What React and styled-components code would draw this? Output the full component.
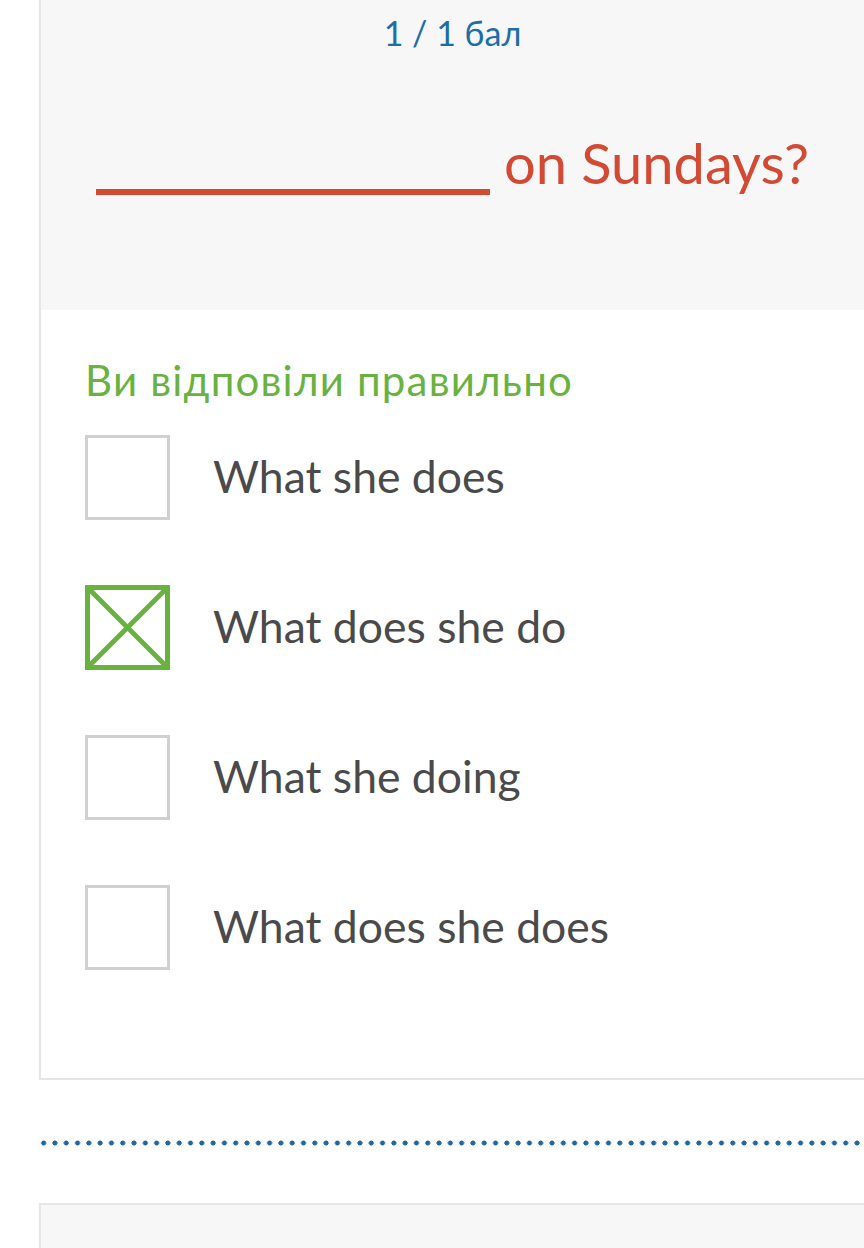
import React from 'react'
import styled, { createGlobalStyle } from 'styled-components'

const GlobalStyle = createGlobalStyle`
    html, body {
        margin: 0;
        padding: 0;
        background: #ffffff;
        font-family: Lato, "Open Sans", sans-serif;
        overflow: hidden;
    }
`;

const options = [
    { text: 'What she does', checked: false },
    { text: 'What does she do', checked: true },
    { text: 'What she doing', checked: false },
    { text: 'What does she does', checked: false },
];

function CheckMark() {
    return (
        <svg width="85" height="85" viewBox="0 0 85 85">
            <rect x="2.5" y="2.5" width="80" height="80" fill="none" stroke="#6ab23f" strokeWidth="5" />
            <line x1="4" y1="4" x2="81" y2="81" stroke="#6ab23f" strokeWidth="5" />
            <line x1="81" y1="4" x2="4" y2="81" stroke="#6ab23f" strokeWidth="5" />
        </svg>
    )
}

function App() {
    return (
        <Page>
            <GlobalStyle />
            <Card>
                <CardHeader>
                    <Score>1 / 1 бал</Score>
                    <Question>
                        <Blank />
                        <span>on Sundays?</span>
                    </Question>
                </CardHeader>
                <CardBody>
                    <Verdict>Ви відповіли правильно</Verdict>
                    <OptionList>
                        {options.map((o) => (
                            <Option key={o.text}>
                                <Box checked={o.checked}>
                                    {o.checked && <CheckMark />}
                                </Box>
                                <OptionText>{o.text}</OptionText>
                            </Option>
                        ))}
                    </OptionList>
                </CardBody>
            </Card>
            <Dots />
            <NextCard />
        </Page>
    )
}

const Page = styled.div`
    padding-left: 39px;
    height: 1248px;
    overflow: hidden;
`;

const Card = styled.div`
    width: 827px;
    box-sizing: border-box;
    border: 2px solid #e6e6e6;
    border-top: none;
    background: #ffffff;
`;

const CardHeader = styled.div`
    height: 310px;
    box-sizing: border-box;
    background: #f7f7f7;
    display: flex;
    flex-direction: column;
    align-items: center;
    padding-top: 9px;
`;

const Score = styled.div`
    color: #1d6ea6;
    font-size: 34px;
    line-height: 48px;
`;

const Question = styled.div`
    margin-top: 74px;
    display: flex;
    align-items: baseline;
    gap: 14px;
    color: #d24a33;
    font-size: 56px;
    line-height: 64px;
`;

const Blank = styled.span`
    display: inline-block;
    width: 394px;
    height: 6px;
    background: #d24a33;
    align-self: flex-end;
    margin-bottom: 0;
`;

const CardBody = styled.div`
    padding: 44px 0 108px 44px;
`;

const Verdict = styled.div`
    color: #6ab23f;
    font-size: 42px;
    line-height: 52px;
    letter-spacing: 1.2px;
`;

const OptionList = styled.div`
    margin-top: 29px;
    display: flex;
    flex-direction: column;
    gap: 65px;
`;

const Option = styled.div`
    display: flex;
    align-items: center;
    gap: 43px;
`;

const Box = styled.div`
    width: 85px;
    height: 85px;
    box-sizing: border-box;
    flex-shrink: 0;
    border: ${(p) => (p.checked ? 'none' : '3px solid #d0d0d0')};
    background: #ffffff;
    svg {
        display: block;
    }
`;

const OptionText = styled.div`
    color: #4a4a4a;
    font-size: 44.5px;
    line-height: 52px;
    margin-top: -4px;
`;

const Dots = styled.div`
    margin-top: 60px;
    height: 6px;
    margin-left: -1px;
    background-image: radial-gradient(circle, #1f66a3 2.2px, transparent 2.8px);
    background-size: 11.3px 6px;
    background-repeat: repeat-x;
`;

const NextCard = styled.div`
    margin-top: 57px;
    width: 827px;
    height: 100px;
    box-sizing: border-box;
    border: 2px solid #e6e6e6;
    background: #f7f7f7;
`;

export default App
